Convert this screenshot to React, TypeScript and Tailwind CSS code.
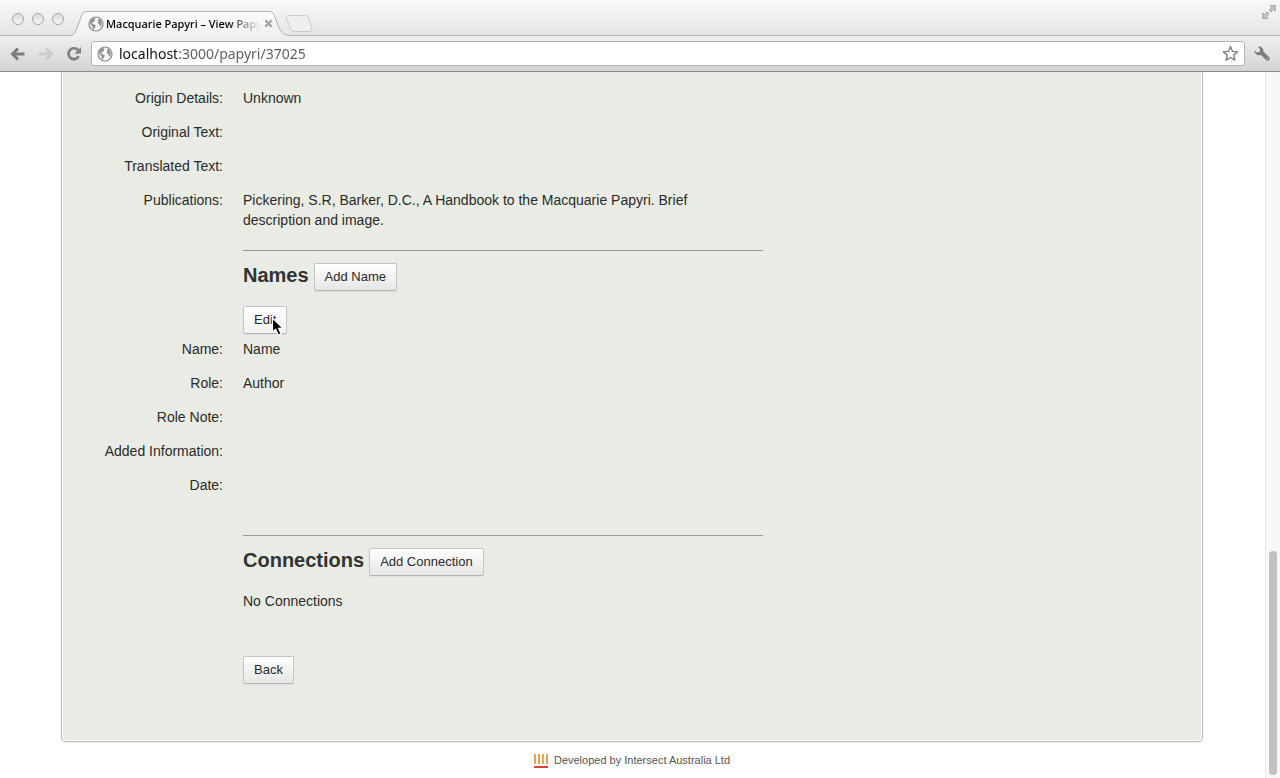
import React from 'react';

const Globe = () => (
  <svg viewBox="0 0 16 16" className="size-4 shrink-0" aria-hidden="true">
    <circle cx="8" cy="8" r="7" fill="#fafafa" stroke="#858585" strokeWidth="1.2" />
    <path d="M2.400 4.600 4.200 2.600 6.600 2 7.600 2.800 6.600 3.800 7.200 4.800 5.800 5.400 5.200 6.800 4 6.800 4.600 8 6.400 8.400 7.800 9.600 7.200 11.200 6.200 12.400 6 13.800 4.800 12.800 4.400 10.600 3 8.800 2 7Z" fill="#929292" />
    <path d="M9.600 3 11.800 3.200 13.400 5.200 13.800 7.400 13.200 9.600 12 11 11.400 9.600 11.600 8.200 10.200 7.600 9.600 6.200 10.600 5Z" fill="#929292" />
  </svg>
);

const Light = () => (
  <svg viewBox="0 0 14 14" className="size-[14px]" aria-hidden="true">
    <defs>
      <linearGradient id="light" x1="0" y1="0" x2="0" y2="1">
        <stop offset="0" stopColor="#dadada" />
        <stop offset="1" stopColor="#f8f8f8" />
      </linearGradient>
    </defs>
    <circle cx="7" cy="7" r="5.5" fill="url(#light)" stroke="#a6a6a6" />
  </svg>
);

const Button = ({ children, className = '' }: { children: React.ReactNode; className?: string }) => (
  <button
    type="button"
    className={`relative h-7 rounded-[2px] border border-[#c4c4c4] border-b-[#b4b4b4] bg-linear-to-b from-white px-[10px] text-[13px] leading-5 text-[#2a2a2a] shadow-[0_1px_1px_rgba(0,0,0,0.05)] ${className || 'to-[#e6e6e6]'}`}
  >
    {children}
  </button>
);

const Row = ({ label, children }: { label: string; children?: React.ReactNode }) => (
  <div className="flex gap-5">
    <dt className="w-40 shrink-0 text-right">{label}</dt>
    <dd className="min-h-5 max-w-[480px]">{children}</dd>
  </div>
);

const details = [
  ['Origin Details:', 'Unknown'],
  ['Original Text:', ''],
  ['Translated Text:', ''],
  ['Publications:', 'Pickering, S.R, Barker, D.C., A Handbook to the Macquarie Papyri. Brief description and image.'],
];

const nameFields = [
  ['Name:', 'Name'],
  ['Role:', 'Author'],
  ['Role Note:', ''],
  ['Added Information:', ''],
  ['Date:', ''],
];

export default function App() {
  return (
    <div className="flex min-h-screen flex-col bg-white font-['Liberation_Sans',Arial,sans-serif]">
      <header className="font-['Noto_Sans',sans-serif]">
        <div className="flex h-9 items-end border-b border-[#b4b4b4] bg-linear-to-b from-[#f8f8f8] to-[#e5e5e5]">
          <div className="flex gap-[6px] pb-[9px] pl-[11px]">
            <Light />
            <Light />
            <Light />
          </div>
          <div className="relative -mb-px ml-[5px] h-[26px] w-[220px] shrink-0">
            <svg viewBox="0 0 220 26" className="absolute inset-0 h-[26px] w-[220px]" aria-hidden="true">
              <defs>
                <linearGradient id="tab" x1="0" y1="0" x2="0" y2="1">
                  <stop offset="0" stopColor="#fbfbfb" />
                  <stop offset="1" stopColor="#f0f0f0" />
                </linearGradient>
              </defs>
              <path d="M0 25.500C4 25 5 23 7 18L11 7C13 2 14 1.500 18 1.500H198C202 1.500 203 2 205 7L209 18C212 23 214 25 220 25.500V26H0Z" fill="url(#tab)" />
              <path d="M0 25.500C4 25 5 23 7 18L11 7C13 2 14 1.500 18 1.500H198C202 1.500 203 2 205 7L209 18C212 23 214 25 220 25.500" fill="none" stroke="#b0b0b0" />
            </svg>
            <div className="relative flex h-[26px] items-center pt-px pl-[18px]">
              <Globe />
              <span className="ml-[2px] w-[156px] text-[11px] leading-4 font-medium whitespace-nowrap text-black [mask-image:linear-gradient(to_right,black_78%,transparent_99%)]">
                Macquarie Papyri – View Papy
              </span>
              <button type="button" aria-label="Close tab" className="ml-[2px]">
                <svg viewBox="0 0 9 9" className="size-[9px]" aria-hidden="true">
                  <path d="M1.300 1.300 7.700 7.700M7.700 1.300 1.300 7.700" stroke="#a0a0a0" strokeWidth="2.200" />
                </svg>
              </button>
            </div>
          </div>
          <button type="button" aria-label="New tab" className="mb-[3px] -ml-[5px]">
            <svg viewBox="0 0 28 17" className="h-[17px] w-7" aria-hidden="true">
              <path d="M3.500 .5H19C21.500 .5 22.500 1 23.500 3L26.500 12C27.500 15 26.500 16.500 24 16.500H10C7.500 16.500 6.300 15.500 5.200 13L1.700 4C.8 1.500 1.500 .5 3.500 .5Z" fill="#efefef" stroke="#cacaca" />
            </svg>
          </button>
          <button type="button" aria-label="Full screen" className="mr-1 mb-4 ml-auto">
            <svg viewBox="0 0 14 14" className="size-[14px]" aria-hidden="true">
              <path d="M8 .5H13.500V6L11.500 4.500 9 7 7 5 9.500 2.500Z M6 13.500H.5V8L2.500 9.500 5 7 7 9 4.500 11.500Z" fill="#c4c4c4" stroke="#9c9c9c" strokeWidth=".8" />
            </svg>
          </button>
        </div>
        <div className="flex h-9 items-center border-b border-[#8c8c8c] bg-linear-to-b from-[#f0f0f0] to-[#d3d3d3] px-[10px]">
          <button type="button" aria-label="Back">
            <svg viewBox="0 0 16 14" className="h-[14px] w-4" aria-hidden="true">
              <path d="M8 1.500 2.500 7 8 12.500M3 7H14.500" fill="none" stroke="#7d7d7d" strokeWidth="3" />
            </svg>
          </button>
          <button type="button" aria-label="Forward" className="ml-3">
            <svg viewBox="0 0 16 14" className="h-[14px] w-4" aria-hidden="true">
              <path d="M8 1.500 13.500 7 8 12.500M13 7H1" fill="none" stroke="#cbcbcb" strokeWidth="3" />
            </svg>
          </button>
          <button type="button" aria-label="Reload" className="ml-[12px]">
            <svg viewBox="0 0 16 16" className="size-4" aria-hidden="true">
              <path d="M12 4.200A5.400 5.400 0 1 0 12.700 10.200" fill="none" stroke="#7d7d7d" strokeWidth="2.600" />
              <path d="M15 1V7.500H8.500Z" fill="#7d7d7d" />
            </svg>
          </button>
          <div className="ml-[9px] flex h-[25px] flex-1 items-center rounded-[3px] border border-[#b3b3b3] bg-white pr-[5px] pl-[5px]">
            <Globe />
            <input
              aria-label="Address"
              defaultValue="localhost:3000/papyri/37025"
              className="ml-[6px] min-w-0 flex-1 bg-[linear-gradient(to_right,#111_58px,#5c5c5c_58px)] bg-clip-text text-[14px] leading-5 text-transparent caret-black outline-none"
            />
            <button type="button" aria-label="Bookmark this page">
              <svg viewBox="0 0 17 17" className="size-[17px]" aria-hidden="true">
                <path d="M8.500 1.500 10.500 6.400 15.600 6.800 11.700 10.100 12.900 15.200 8.500 12.500 4.100 15.200 5.300 10.100 1.400 6.800 6.500 6.400Z" fill="#fff" stroke="#808080" strokeWidth="1.400" strokeLinejoin="round" />
              </svg>
            </button>
          </div>
          <button type="button" aria-label="Settings" className="ml-[9px]">
            <svg viewBox="0 0 16 16" className="size-4" aria-hidden="true">
              <path d="M4 .6C7 0 9.800 2 9.300 5.600L15 10.900C17 13 14.800 15.800 12.400 14.500L7 8.900C3.800 10.200.3 7.900.4 4.400L3 6.600 5.600 5.900 6.200 3.400Z" fill="#7d7d7d" />
              <circle cx="13.300" cy="12.800" r=".8" fill="#d8d8d8" />
            </svg>
          </button>
        </div>
      </header>

      <div className="flex flex-1">
        <main className="min-w-0 flex-1 pr-[62px] pl-[61px]">
          <div className="rounded-b-[5px] border border-t-0 border-[#babcb6] bg-white px-px pb-px shadow-[0_1px_2px_rgba(0,0,0,0.1)]">
            <div className="rounded-b-[4px] bg-[#e9ece5] pt-4 pb-14 text-[14px] leading-5 text-[#2a2a2a]">
              <dl className="flex flex-col gap-[14px]">
                {details.map(([label, value]) => (
                  <Row key={label} label={label}>{value}</Row>
                ))}
              </dl>
              <section className="mt-5 ml-[180px] w-[520px] border-t border-[#999] pt-3">
                <div className="flex gap-[5px]">
                  <h2 className="text-[20px] leading-6 font-bold text-[#333]">Names</h2>
                  <Button>Add Name</Button>
                </div>
                <div className="relative mt-[15px] w-max">
                  <Button className="to-[#f0f0f0]">Edit</Button>
                  <svg viewBox="0 0 14 20" className="absolute top-[11px] left-7 h-5 w-[14px]" aria-hidden="true">
                    <path d="M1.500 1V15L4.700 12.200 7.200 18 10 16.800 7.600 11.300H12Z" fill="#000" stroke="#fff" strokeWidth="1.200" />
                  </svg>
                </div>
              </section>
              <dl className="mt-[5px] flex flex-col gap-[14px]">
                {nameFields.map(([label, value]) => (
                  <Row key={label} label={label}>{value}</Row>
                ))}
              </dl>
              <section className="mt-10 ml-[180px] w-[520px] border-t border-[#999] pt-3">
                <div className="flex gap-[5px]">
                  <h2 className="text-[20px] leading-6 font-bold text-[#333]">Connections</h2>
                  <Button>Add Connection</Button>
                </div>
                <p className="mt-[15px]">No Connections</p>
                <div className="mt-[45px]">
                  <Button>Back</Button>
                </div>
              </section>
            </div>
          </div>
          <footer className="flex items-end justify-center gap-[6px] pt-[10px] text-[11px] leading-4 text-[#555]">
            <svg viewBox="0 0 14 14" className="size-[14px]" aria-hidden="true">
              <path d="M1 0V10M5 0V10M9 0V10M13 0V10" stroke="#f0a048" strokeWidth="2" />
              <path d="M0 13H14" stroke="#e0402f" strokeWidth="2" />
            </svg>
            <span>Developed by Intersect Australia Ltd</span>
          </footer>
        </main>
        <div className="flex w-[15px] shrink-0 flex-col items-center justify-end border-l border-[#e6e6e6] bg-[#f8f8f8] pb-[3px]">
          <div className="h-[224px] w-2 rounded-full bg-[#c1c1c1]" />
        </div>
      </div>
    </div>
  );
}
